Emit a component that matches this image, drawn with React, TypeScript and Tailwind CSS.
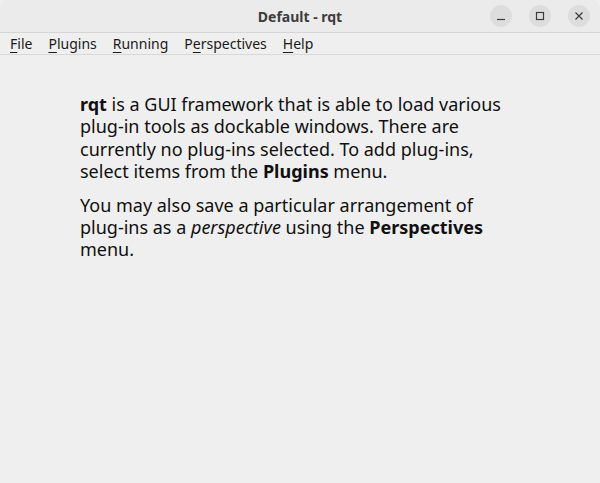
import React from "react";

function U({ c }: { c: string }) {
  return <span className="underline underline-offset-[3px] decoration-[1px]">{c}</span>;
}

export default function App() {
  const font = { fontFamily: '"Noto Sans", "Open Sans", sans-serif' };
  return (
    <div className="w-[600px] h-[483px] flex flex-col bg-[#efefef] text-[#0f0f0f] overflow-hidden" style={font}>
      <div className="h-[33px] shrink-0 relative flex items-center justify-center bg-[#ebebeb] border-b border-[#d6d6d6] rounded-t-[8px]">
        <span className="text-[14px] font-bold text-[#3c3c3c]">Default - rqt</span>
        <div className="absolute right-[10px] top-[5px] flex gap-[17px]">
          <div className="w-[22px] h-[22px] rounded-full bg-[#dddddd] flex items-center justify-center">
            <svg width="10" height="10" viewBox="0 0 10 10"><path d="M1 8.5h8" stroke="#3c3c3c" strokeWidth="1.2" /></svg>
          </div>
          <div className="w-[22px] h-[22px] rounded-full bg-[#dddddd] flex items-center justify-center">
            <svg width="10" height="10" viewBox="0 0 10 10"><rect x="1.5" y="1.5" width="7" height="7" fill="none" stroke="#3c3c3c" strokeWidth="1.2" /></svg>
          </div>
          <div className="w-[22px] h-[22px] rounded-full bg-[#dddddd] flex items-center justify-center">
            <svg width="10" height="10" viewBox="0 0 10 10"><path d="M1.5 1.5l7 7M8.5 1.5l-7 7" stroke="#3c3c3c" strokeWidth="1.2" /></svg>
          </div>
        </div>
      </div>
      <div className="h-[22px] shrink-0 flex items-center gap-[16px] pl-[10px] text-[14px] text-[#1a1a1a] border-b border-[#d8d8d8]">
        <span><U c="F" />ile</span>
        <span><U c="P" />lugins</span>
        <span><U c="R" />unning</span>
        <span>P<U c="e" />rspectives</span>
        <span><U c="H" />elp</span>
      </div>
      <div className="pl-[80px] pt-[38px] text-[18px] leading-[22.4px] text-[#101010]">
        <p className="mb-[11px]">
          <b>rqt</b> is a GUI framework that is able to load various<br />
          plug-in tools as dockable windows. There are<br />
          currently no plug-ins selected. To add plug-ins,<br />
          select items from the <b>Plugins</b> menu.
        </p>
        <p>
          You may also save a particular arrangement of<br />
          plug-ins as a <i>perspective</i> using the <b>Perspectives</b><br />
          menu.
        </p>
      </div>
    </div>
  );
}
